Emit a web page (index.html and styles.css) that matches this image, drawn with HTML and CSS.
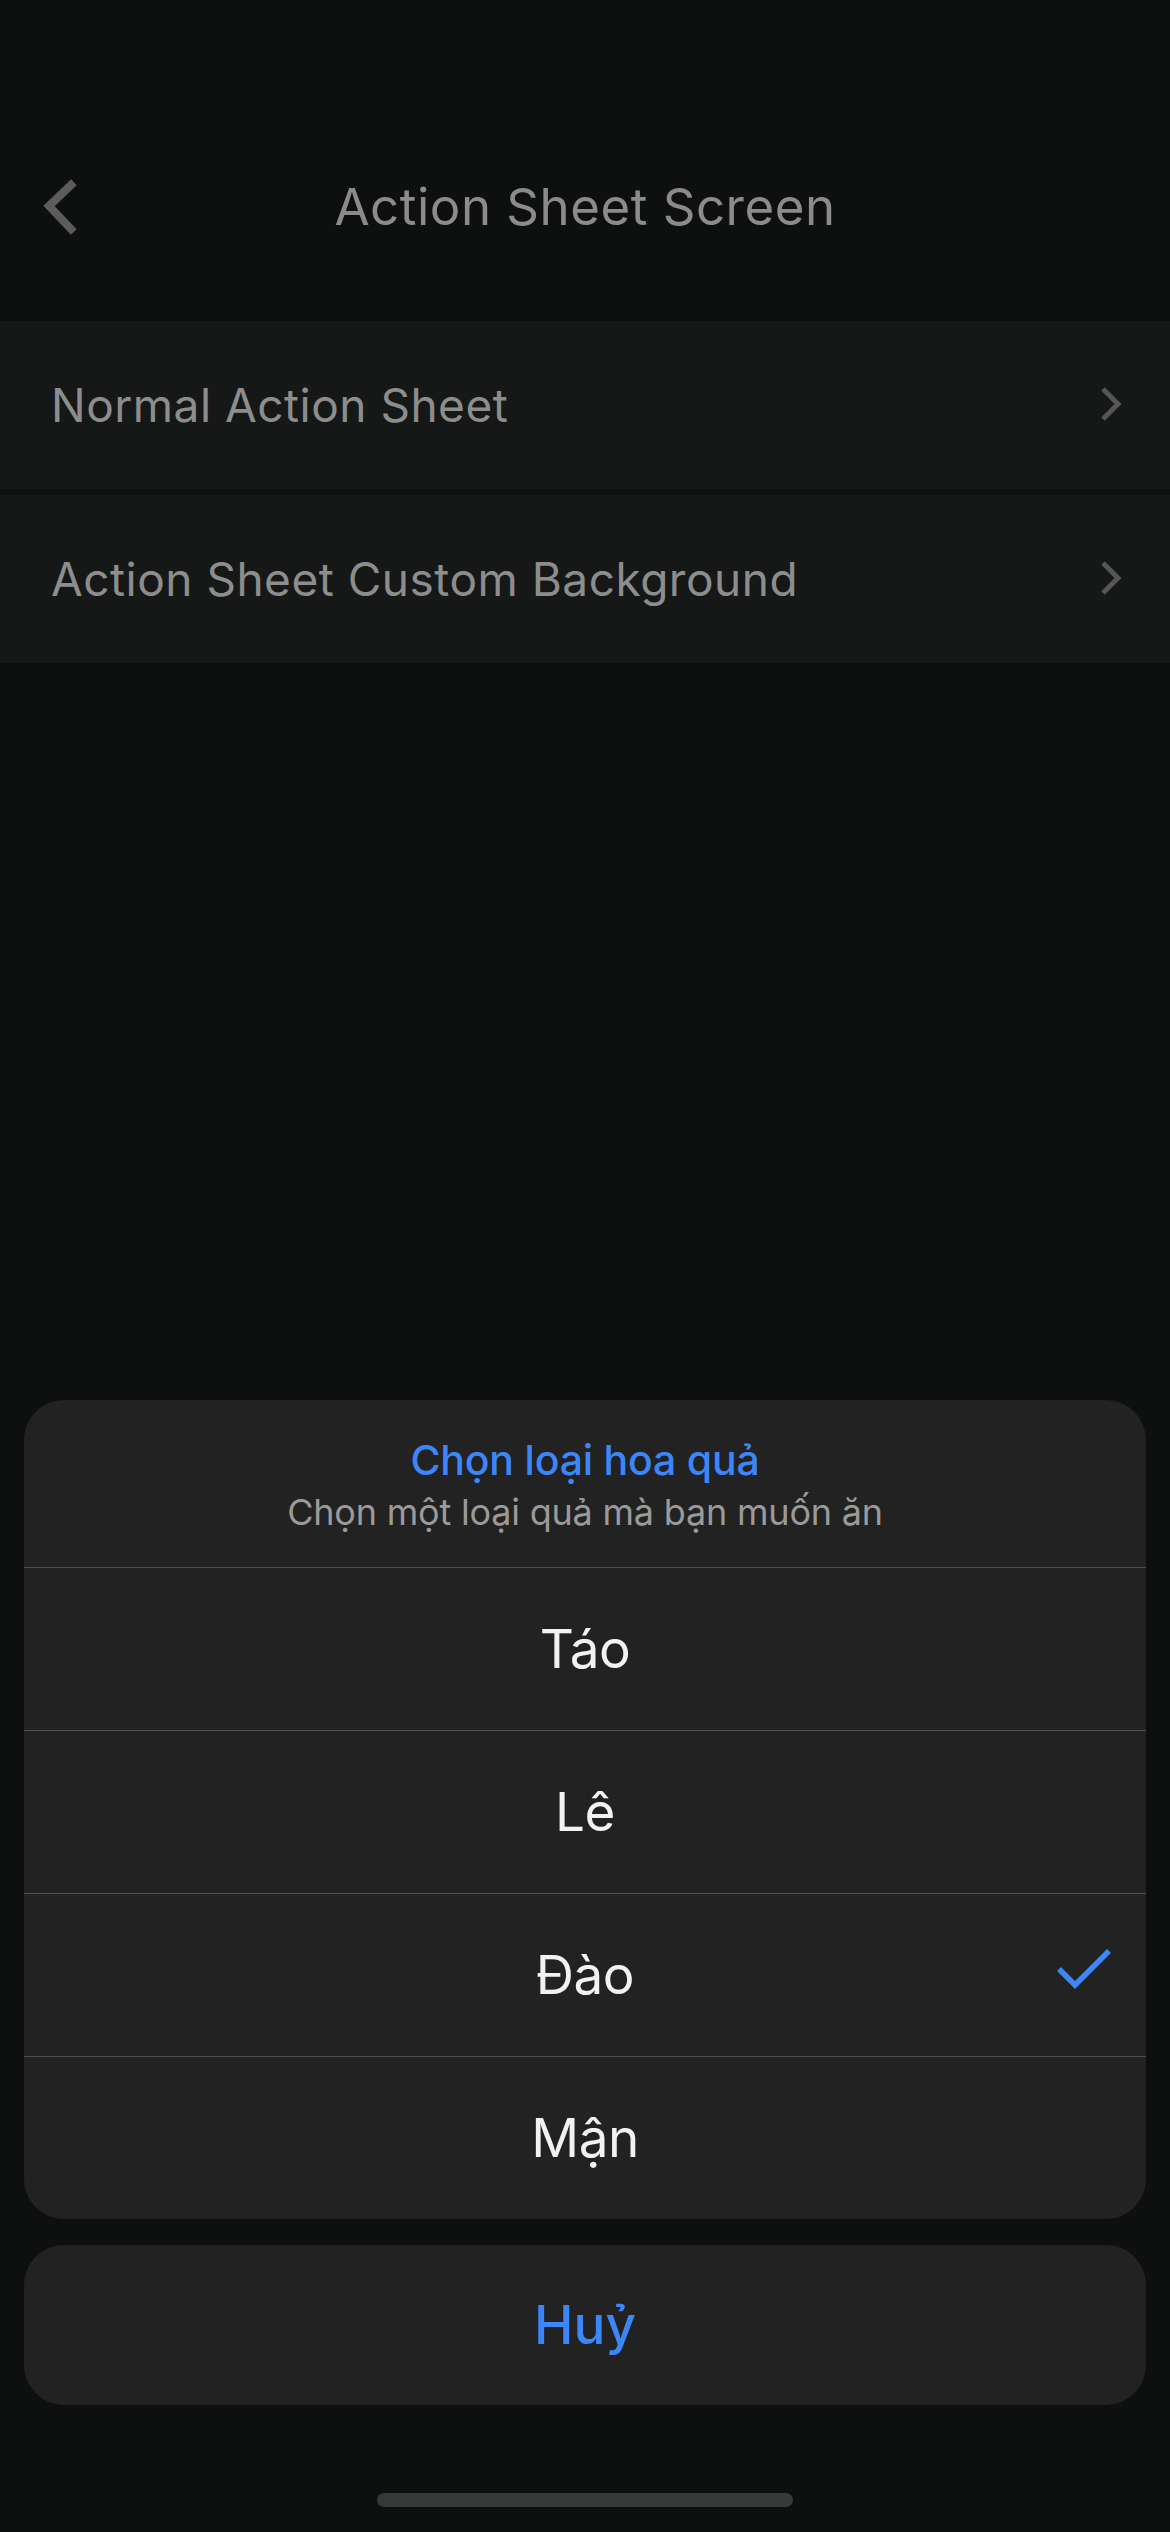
FILE: index.html
```html
<!DOCTYPE html>
<html lang="vi">
<head>
<meta charset="utf-8">
<title>Action Sheet Screen</title>
<link rel="stylesheet" href="styles.css">
</head>
<body>
<div class="screen">
  <header class="nav">
    <button class="back" aria-label="Back">
      <svg width="40" height="60" viewBox="0 0 40 60"><path d="M29 6 L7 27 L29 50" fill="none" stroke="#5c5c5c" stroke-width="8" stroke-linecap="square" stroke-linejoin="miter"/></svg>
    </button>
    <h1 class="nav-title">Action Sheet Screen</h1>
  </header>
  <ul class="list">
    <li class="row"><span class="row-label">Normal Action Sheet</span>
      <svg class="chev" width="24" height="40" viewBox="0 0 24 40"><path d="M5 3 L20 18 L5 33" fill="none" stroke="#555656" stroke-width="5"/></svg>
    </li>
    <li class="row"><span class="row-label">Action Sheet Custom Background</span>
      <svg class="chev" width="24" height="40" viewBox="0 0 24 40"><path d="M5 3 L20 18 L5 33" fill="none" stroke="#555656" stroke-width="5"/></svg>
    </li>
  </ul>

  <div class="sheet-wrap">
    <div class="sheet">
      <div class="sheet-head">
        <div class="sheet-title">Chọn loại hoa quả</div>
        <div class="sheet-sub">Chọn một loại quả mà bạn muốn ăn</div>
      </div>
      <div class="opt">Táo</div>
      <div class="opt">Lê</div>
      <div class="opt selected">Đào
        <svg class="check" width="60" height="50" viewBox="0 0 60 50"><path d="M4 22 L20 38 L54 4" fill="none" stroke="#3d86f7" stroke-width="5.5"/></svg>
      </div>
      <div class="opt">Mận</div>
    </div>
    <div class="cancel">Huỷ</div>
  </div>
  <div class="home-ind"></div>
</div>
</body>
</html>
```

FILE: styles.css
```css
* { box-sizing: border-box; }
html, body {
  margin: 0;
  padding: 0;
  background: #0e1010;
}
body {
  font-family: Inter, "Noto Sans", "Liberation Sans", sans-serif;
  width: 1170px;
  height: 2532px;
  overflow: hidden;
}
.screen {
  position: relative;
  width: 1170px;
  height: 2532px;
  display: flex;
  flex-direction: column;
}
.nav {
  position: relative;
  height: 273px;
  display: flex;
  align-items: flex-start;
  justify-content: center;
  padding-top: 175px;
}
.back {
  position: absolute;
  left: 42px;
  top: 179px;
  background: none;
  border: 0;
  padding: 0;
  display: block;
}
.back svg { display: block; }
.nav-title {
  margin: 0;
  font-size: 51px;
  line-height: 64px;
  font-weight: 400;
  color: #8b8b8b;
  letter-spacing: 0.5px;
}
.list {
  list-style: none;
  margin: 48px 0 0;
  padding: 0;
  display: flex;
  flex-direction: column;
  gap: 6px;
}
.row {
  height: 168px;
  background: #161818;
  display: flex;
  align-items: center;
  justify-content: space-between;
  padding: 0 48px 0 51px;
}
.row-label {
  font-size: 46px;
  color: #8d8d8d;
  letter-spacing: 0.5px;
}
.chev { display: block; margin-top: 2px; }

.sheet-wrap {
  position: absolute;
  left: 24px;
  right: 24px;
  top: 1400px;
  display: flex;
  flex-direction: column;
  gap: 26px;
}
.sheet {
  background: #222222;
  border-radius: 40px;
  overflow: hidden;
}
.sheet-head {
  height: 168px;
  display: flex;
  flex-direction: column;
  align-items: center;
  padding-top: 33px;
  border-bottom: 1px solid #4f4f4f;
}
.sheet-title {
  font-size: 41px;
  line-height: 54px;
  font-weight: 500;
  color: #3d86f7;
  letter-spacing: -0.2px;
}
.sheet-sub {
  font-size: 36px;
  line-height: 50px;
  color: #9a9a9a;
  letter-spacing: -0.2px;
}
.opt {
  position: relative;
  height: 163px;
  display: flex;
  align-items: center;
  justify-content: center;
  font-size: 53px;
  color: #f2f2f2;
  border-bottom: 1px solid #4f4f4f;
  letter-spacing: -0.5px;
}
.opt:last-child { border-bottom: 0; height: 162px; }
.check {
  position: absolute;
  right: 31px;
  top: 53px;
}
.cancel {
  height: 160px;
  background: #222222;
  border-radius: 40px;
  display: flex;
  align-items: center;
  justify-content: center;
  font-size: 53px;
  font-weight: 500;
  color: #3d86f7;
}
.home-ind {
  position: absolute;
  left: 377px;
  top: 2493px;
  width: 416px;
  height: 14px;
  border-radius: 7px;
  background: #383a3a;
}
```
